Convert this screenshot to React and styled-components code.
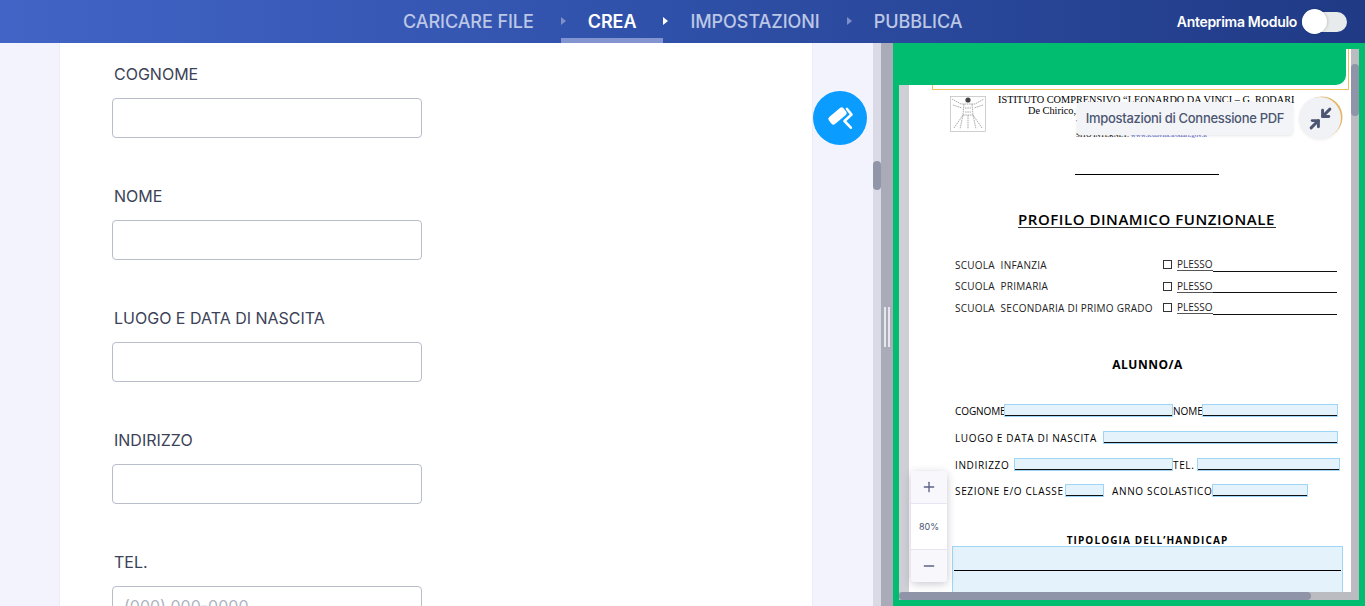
import React from "react";
import styled, { createGlobalStyle } from "styled-components";
import { Minimize2, Plus, Minus } from "lucide-react";

const GlobalStyle = createGlobalStyle`
    html, body {
        margin: 0;
        height: 100%;
        overflow: hidden;
        font-family: "Inter", "Liberation Sans", sans-serif;
    }
    #root {
        height: 100%;
    }
`;

const fields = ["COGNOME", "NOME", "LUOGO E DATA DI NASCITA", "INDIRIZZO", "TEL."];
const steps = [
    { label: "CARICARE FILE" },
    { label: "CREA", active: true },
    { label: "IMPOSTAZIONI" },
    { label: "PUBBLICA" },
];

const RollerIcon = () => (
    <svg width="28" height="28" viewBox="0 0 28 28">
        <rect x="2" y="7.5" width="19" height="9" rx="2.5" fill="#fff" transform="rotate(-40 11.5 12)" />
        <path d="M21 5l4.5 5.5-7 6.5 6.3 6.7" fill="none" stroke="#fff" strokeWidth="2.6" strokeLinecap="round" strokeLinejoin="round" />
    </svg>
);

const VitruvianIcon = () => (
    <svg width="36" height="36" viewBox="0 0 36 36">
        <rect x="0.5" y="0.5" width="35" height="35" fill="#fff" stroke="#bbb" strokeWidth="0.7" />
        <circle cx="18" cy="4" r="2.6" fill="#444" />
        <path d="M2 3l9 5h14l9-5M3 9l9 3M33 9l-9 3M14 8l-1 11-3 14M22 8l1 11 3 14M13 19h10M18 19v14M4 32l9-13M32 32l-9-13M15 12h6M15 16h6" fill="none" stroke="#777" strokeWidth="0.6" strokeDasharray="1.6 0.7" />
    </svg>
);

const App = () => {
    return (
        <Page>
            <GlobalStyle />
            <Header>
                <Steps>
                    {steps.map((s, i) => (
                        <React.Fragment key={s.label}>
                            {i > 0 && <StepArrow $active={steps[i - 1].active} />}
                            <Step $active={s.active}>{s.label}</Step>
                        </React.Fragment>
                    ))}
                </Steps>
                <PreviewToggle>
                    <span>Anteprima Modulo</span>
                    <Switch><Knob /></Switch>
                </PreviewToggle>
            </Header>
            <Main>
                <Builder>
                    <FormCard>
                        {fields.map((f) => (
                            <Field key={f}>
                                <Label>{f}</Label>
                                <TextInput readOnly placeholder={f === "TEL." ? "(000) 000-0000" : ""} />
                            </Field>
                        ))}
                    </FormCard>
                    <DesignButton><RollerIcon /></DesignButton>
                    <VScroll><VThumb /></VScroll>
                </Builder>
                <Divider><Grip /></Divider>
                <PdfPane>
                    <Viewer>
                        <LeftGutter />
                        <Sheet>
                            <OrangeFrame />
                            <Letterhead>
                                <VitruvianIcon />
                                <HeadText>
                                    <HeadLine>ISTITUTO COMPRENSIVO “LEONARDO DA VINCI – G. RODARI</HeadLine>
                                    <HeadLine $indent={30}>De Chirico, 5 Ostia</HeadLine>
                                    <HeadLine $indent={78} $blue>www.icdavincirodari.edu.it</HeadLine>
                                    <HeadLine $indent={78} $tiny>SITO INTERNET: <BlueLink>www.icdavincirodari.gov.it</BlueLink></HeadLine>
                                </HeadText>
                            </Letterhead>
                            <Rule />
                            <Title>PROFILO DINAMICO FUNZIONALE</Title>
                            <SchoolRow $first><SchoolName>SCUOLA&nbsp; INFANZIA</SchoolName><Box /><Plesso>PLESSO</Plesso><Fill /></SchoolRow>
                            <SchoolRow><SchoolName>SCUOLA&nbsp; PRIMARIA</SchoolName><Box /><Plesso>PLESSO</Plesso><Fill /></SchoolRow>
                            <SchoolRow><SchoolName>SCUOLA&nbsp; SECONDARIA DI PRIMO GRADO</SchoolName><Box /><Plesso>PLESSO</Plesso><Fill /></SchoolRow>
                            <Heading>ALUNNO/A</Heading>
                            <FormRow $top={32}>
                                <RowText $w={49} $ls={-0.1}>COGNOME</RowText><PdfField $w={169} />
                                <RowText $w={29} $ls={0}>NOME</RowText><PdfField $w={136} />
                            </FormRow>
                            <FormRow $top={13}>
                                <RowText $w={148}>LUOGO E DATA DI NASCITA</RowText><PdfField $w={235} />
                            </FormRow>
                            <FormRow $top={13}>
                                <RowText $w={59}>INDIRIZZO</RowText><PdfField $w={159} />
                                <RowText $w={24}>TEL.</RowText><PdfField $w={143} />
                            </FormRow>
                            <FormRow $top={12}>
                                <RowText $w={110}>SEZIONE E/O CLASSE</RowText><PdfField $w={39} />
                                <RowText $w={108} $pad={8}>ANNO SCOLASTICO</RowText><PdfField $w={96} />
                            </FormRow>
                            <Heading $small>TIPOLOGIA DELL’HANDICAP</Heading>
                            <BigField><BigFieldLine /></BigField>
                        </Sheet>
                        <Banner />
                        <Tooltip>Impostazioni di Connessione PDF</Tooltip>
                        <CollapseButton><Minimize2 size={25} strokeWidth={2.8} /></CollapseButton>
                        <ZoomBox>
                            <ZoomBtn><Plus size={16} /></ZoomBtn>
                            <ZoomValue>80%</ZoomValue>
                            <ZoomBtn><Minus size={16} /></ZoomBtn>
                        </ZoomBox>
                        <DocVScroll><DocVThumb /></DocVScroll>
                        <DocHScroll><DocHThumb /></DocHScroll>
                    </Viewer>
                </PdfPane>
            </Main>
        </Page>
    );
};

export default App;

const Page = styled.div`
    display: flex;
    flex-direction: column;
    height: 100vh;
    overflow: hidden;
`;

const Header = styled.header`
    flex: 0 0 43px;
    position: relative;
    display: flex;
    align-items: center;
    justify-content: flex-end;
    padding-right: 18px;
    background: linear-gradient(90deg, #4264c6 0%, #2f50a8 50%, #203a85 100%);
`;

const Steps = styled.nav`
    position: absolute;
    left: 403px;
    top: 0;
    height: 43px;
    display: flex;
    align-items: stretch;
`;

const Step = styled.div`
    position: relative;
    display: flex;
    align-items: center;
    font-size: 18px;
    font-weight: ${(p) => (p.$active ? 600 : 500)};
    letter-spacing: ${(p) => (p.$active ? "-0.1px" : "-0.06px")};
    color: ${(p) => (p.$active ? "#fff" : "#bcc7e6")};
    padding-bottom: 1px;
    &::after {
        content: "";
        display: ${(p) => (p.$active ? "block" : "none")};
        position: absolute;
        left: -27px;
        right: -27px;
        bottom: 0;
        height: 5px;
        background: #8295d0;
    }
`;

const StepArrow = styled.div`
    position: relative;
    width: 54px;
    &::before {
        content: "";
        position: absolute;
        left: 27px;
        top: 17px;
        border-left: 5px solid ${(p) => (p.$active ? "#fff" : "#7f90c8")};
        border-top: 4.5px solid transparent;
        border-bottom: 4.5px solid transparent;
    }
`;

const PreviewToggle = styled.div`
    display: flex;
    align-items: center;
    gap: 5px;
    font-size: 14px;
    font-weight: 600;
    letter-spacing: -0.3px;
    color: #fff;
`;

const Switch = styled.div`
    width: 45px;
    height: 20px;
    border-radius: 10px;
    background: #e8ebec;
    position: relative;
`;

const Knob = styled.div`
    position: absolute;
    left: 0;
    top: -2.5px;
    width: 25px;
    height: 25px;
    border-radius: 50%;
    background: #fff;
    box-shadow: 1px 0 3px rgba(0, 0, 0, 0.15);
`;

const Main = styled.main`
    flex: 1;
    display: flex;
    min-height: 0;
`;

const Builder = styled.section`
    position: relative;
    flex: 0 0 881px;
    background: #f3f3fe;
    padding-left: 60px;
    overflow: hidden;
    box-sizing: border-box;
`;

const FormCard = styled.div`
    width: 752px;
    box-sizing: border-box;
    background: #fff;
    box-shadow: 0 0 0 1px #ebebf9;
    padding: 22px 52px 0;
    display: flex;
    flex-direction: column;
    gap: 49px;
`;

const Field = styled.div`
    display: flex;
    flex-direction: column;
    gap: 14px;
`;

const Label = styled.label`
    font-size: 16px;
    line-height: 19px;
    color: #3c4257;
    padding-left: 2px;
`;

const TextInput = styled.input`
    width: 310px;
    height: 40px;
    box-sizing: border-box;
    border: 1px solid #b8bdc9;
    border-radius: 4px;
    padding: 0 11px;
    font: 16px "Inter", "Liberation Sans", sans-serif;
    background: #fff;
    outline: none;
    &::placeholder {
        color: #aeb3c2;
    }
`;

const DesignButton = styled.button`
    position: absolute;
    left: 813px;
    top: 48px;
    width: 54px;
    height: 54px;
    border: 0;
    padding: 0;
    border-radius: 50%;
    background: #0a9dff;
    display: flex;
    align-items: center;
    justify-content: center;
`;

const VScroll = styled.div`
    position: absolute;
    right: 0;
    top: 0;
    bottom: 0;
    width: 8px;
    background: #d9dae6;
`;

const VThumb = styled.div`
    position: absolute;
    top: 118px;
    width: 8px;
    height: 29px;
    border-radius: 4px;
    background: #9095a8;
`;

const Divider = styled.div`
    flex: 0 0 12px;
    background: #a9acb8;
    display: flex;
    align-items: center;
    justify-content: center;
`;

const Grip = styled.div`
    width: 2px;
    height: 40px;
    margin-top: 5px;
    border-left: 2px solid #e6e7ec;
    border-right: 2px solid #e6e7ec;
`;

const PdfPane = styled.section`
    flex: 1;
    min-width: 0;
    background: #00bd6f;
    padding: 6px;
    display: flex;
`;

const Viewer = styled.div`
    position: relative;
    flex: 1;
    display: flex;
    background: #fff;
    overflow: hidden;
`;

const LeftGutter = styled.div`
    flex: 0 0 10px;
    background: #cfd0d6;
`;

const Sheet = styled.div`
    flex: 1;
    background: #fff;
    padding: 41px 0 0 41px;
    color: #000;
    font-family: "Open Sans", "Liberation Sans", sans-serif;
    font-size: 10px;
`;

const OrangeFrame = styled.div`
    position: absolute;
    left: 33px;
    top: 0;
    width: 417px;
    height: 41px;
    box-sizing: border-box;
    border-right: 1px solid #eec05a;
    border-bottom: 1px solid #eec05a;
    border-left: 1px solid #eec05a;
`;

const Letterhead = styled.div`
    display: flex;
    gap: 12px;
    align-items: flex-start;
    height: 37px;
    margin-top: 6px;
`;

const HeadText = styled.div`
    margin-top: -2px;
`;

const HeadLine = styled.div`
    font: ${(p) => (p.$tiny ? "7px/7px" : "10.3px/11px")} "Liberation Serif", serif;
    white-space: nowrap;
    color: ${(p) => (p.$blue ? "#1c2bb0" : "#000")};
    margin-left: ${(p) => p.$indent || 0}px;
    margin-top: ${(p) => (p.$tiny ? "5px" : "0")};
`;

const BlueLink = styled.span`
    color: #4a55c4;
`;

const Rule = styled.div`
    width: 144px;
    height: 1px;
    background: #000;
    margin: 41px 0 0 125px;
`;

const Title = styled.div`
    width: 258px;
    margin: 35px 0 0 68px;
    font-size: 15px;
    line-height: 18px;
    font-weight: 600;
    letter-spacing: 0.55px;
    white-space: nowrap;
    border-bottom: 1.5px solid #333;
    height: 17px;
`;

const SchoolRow = styled.div`
    display: flex;
    align-items: center;
    height: 21.5px;
    margin-top: ${(p) => (p.$first ? "26px" : "0")};
    margin-left: 5px;
    white-space: nowrap;
    color: #222;
`;

const SchoolName = styled.div`
    width: 208px;
    letter-spacing: 0.25px;
`;

const Box = styled.div`
    width: 7px;
    height: 7px;
    border: 1px solid #333;
    margin-right: 5px;
`;

const Plesso = styled.div`
    border-bottom: 1px solid #555;
    line-height: 12px;
`;

const Fill = styled.div`
    flex: 0 0 124px;
    height: 1px;
    background: #111;
    align-self: flex-end;
    margin-bottom: 4px;
`;

const Heading = styled.div`
    text-align: center;
    width: 391px;
    margin-top: ${(p) => (p.$small ? "35px" : "39px")};
    margin-left: 2px;
    font-size: ${(p) => (p.$small ? "10px" : "12px")};
    font-weight: 700;
    line-height: 14px;
    letter-spacing: ${(p) => (p.$small ? "1.1px" : "0.5px")};
`;

const FormRow = styled.div`
    display: flex;
    align-items: center;
    height: 14px;
    margin-top: ${(p) => p.$top}px;
    margin-left: 5px;
    white-space: nowrap;
`;

const RowText = styled.div`
    width: ${(p) => p.$w}px;
    padding-left: ${(p) => p.$pad || 0}px;
    box-sizing: border-box;
    letter-spacing: ${(p) => p.$ls ?? 0.65}px;
`;

const PdfField = styled.div`
    width: ${(p) => p.$w}px;
    height: 13px;
    box-sizing: border-box;
    border: 1px solid #9fd6f7;
    background: #e4f2fc;
    box-shadow: inset 0 -1px 0 #111;
`;

const BigField = styled.div`
    width: 391px;
    height: 70px;
    margin: -1px 0 0 2px;
    box-sizing: border-box;
    border: 1px solid #9fd6f7;
    background: #e4f2fc;
    padding: 23px 1px 0;
`;

const BigFieldLine = styled.div`
    height: 1px;
    background: #000;
`;

const Banner = styled.div`
    position: absolute;
    left: 0;
    top: 0;
    width: 447px;
    height: 36px;
    background: #00bd6f;
    border-bottom-right-radius: 10px;
`;

const Tooltip = styled.div`
    position: absolute;
    left: 178px;
    top: 53px;
    width: 216px;
    height: 33px;
    background: #f3f4f7;
    border-radius: 4px;
    box-shadow: 0 1px 3px rgba(0, 0, 0, 0.1);
    color: #4c5672;
    font-size: 13px;
    font-weight: 500;
    letter-spacing: -0.3px;
    line-height: 33px;
    text-align: center;
    white-space: nowrap;
`;

const CollapseButton = styled.div`
    position: absolute;
    left: 400px;
    top: 48px;
    width: 42px;
    height: 42px;
    border-radius: 50%;
    background: #f1f2f5;
    box-shadow: 2px -1px 0 -0.5px #e3b565, 0 1px 3px rgba(0, 0, 0, 0.08);
    color: #4c5672;
    display: flex;
    align-items: center;
    justify-content: center;
`;

const ZoomBox = styled.div`
    position: absolute;
    left: 12px;
    top: 422px;
    width: 36px;
    height: 111px;
    background: #fff;
    border-radius: 4px;
    box-shadow: 0 2px 8px rgba(60, 60, 90, 0.28);
    display: flex;
    flex-direction: column;
    overflow: hidden;
`;

const ZoomBtn = styled.div`
    flex: 0 0 32px;
    background: #f7f7fc;
    color: #5d6286;
    display: flex;
    align-items: center;
    justify-content: center;
`;

const ZoomValue = styled.div`
    flex: 1;
    display: flex;
    align-items: center;
    justify-content: center;
    font-size: 9px;
    color: #4c5672;
    background: #fff;
    border-top: 1px solid #e6e6f2;
    border-bottom: 1px solid #e6e6f2;
`;

const DocVScroll = styled.div`
    position: absolute;
    right: 0;
    top: 0;
    bottom: 0;
    width: 8px;
    background: #bbbcc2;
`;

const DocVThumb = styled.div`
    position: absolute;
    top: 15px;
    width: 8px;
    height: 52px;
    border-radius: 4px;
    background: #8f94a8;
`;

const DocHScroll = styled.div`
    position: absolute;
    left: 0;
    right: 8px;
    bottom: 0;
    height: 8px;
    background: #bbbcc2;
`;

const DocHThumb = styled.div`
    width: 412px;
    height: 8px;
    border-radius: 4px;
    background: #8f94a8;
`;
